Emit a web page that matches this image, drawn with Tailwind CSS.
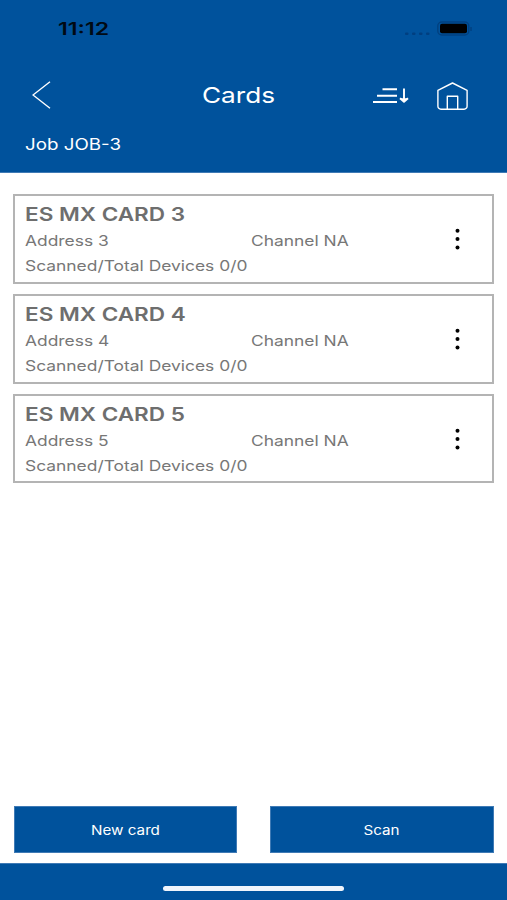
<!DOCTYPE html>
<html lang="en">
<head>
    <meta charset="UTF-8">
    <meta name="viewport" content="width=device-width, initial-scale=1.0">
    <title>Cards</title>
    <script src="https://cdn.jsdelivr.net/npm/@tailwindcss/browser@4"></script>
</head>
<body class="bg-white font-['Inter','Liberation_Sans',sans-serif]">
    <div class="flex h-[900px] w-[507px] flex-col overflow-hidden">
        <header class="h-[173px] shrink-0 border-b border-[#3f7ab5] bg-[#00529c] text-white">
            <!-- Status bar -->
            <div class="flex h-[57px] items-center justify-between pr-[35px] pl-[58px]">
                <span class="origin-left scale-x-[1.36] text-[17px] leading-6 font-semibold text-[#000a14]">11:12</span>
                <svg class="h-[16px] w-[70px]" viewBox="0 0 70 16" fill="none">
                    <g fill="#003f80">
                        <rect x="3" y="11.500" width="3.500" height="2.500" rx="1" />
                        <rect x="10" y="11.500" width="3.500" height="2.500" rx="1" />
                        <rect x="17" y="11.500" width="3.500" height="2.500" rx="1" />
                        <rect x="24" y="11.500" width="3.500" height="2.500" rx="1" />
                    </g>
                    <rect x="35.800" y="1" width="31" height="13" rx="4" stroke="#00407f" stroke-width="1.4" />
                    <rect x="38" y="2.800" width="27" height="9.500" rx="2" fill="#000" />
                    <path d="M69 6v4" stroke="#00407f" stroke-width="1.4" />
                </svg>
            </div>

            <!-- Title bar -->
            <div class="grid h-[76px] grid-cols-[170px_auto_1fr] items-center pr-[39px] pl-[32px]">
                <svg class="h-[28px] w-[19px]" viewBox="0 0 19 28" fill="none" stroke="#fff" stroke-width="1.4">
                    <path d="M18 .8L1 14l17 13.2" />
                </svg>
                <h1 class="origin-left scale-x-[1.19] text-[22px] leading-7">Cards</h1>
                <div class="flex items-center justify-end gap-[28px]">
                    <svg class="h-[28px] w-[38px]" viewBox="0 0 38 28" fill="none" stroke="#fff" stroke-width="1.9">
                        <path d="M11.500 8.200H26M6 14.700h20M2 21h24M33 7.500V18" />
                        <path d="M29 17.300l4 3.500 4-3.500" fill="#fff" stroke-linejoin="round" />
                    </svg>
                    <svg class="mt-[2px] h-[28px] w-[31px]" viewBox="0 0 31 28" fill="none" stroke="#fff" stroke-width="1.4" stroke-linejoin="round">
                        <path d="M.9 8.300L15.500 1l14.600 7.300v15.900a3 3 0 0 1-3 3H3.900a3 3 0 0 1-3-3z" />
                        <path d="M10.300 27V14.200h10.400V27" />
                    </svg>
                </div>
            </div>
            <div class="pt-[1px] pl-[24.500px]">
                <p class="w-fit origin-left scale-x-[1.21] text-[15.500px] leading-[22px]">Job JOB-3</p>
            </div>
        </header>

        <main class="flex grow flex-col gap-[10px] px-[13px] pt-[21.300px] text-[#777]">
            <section class="flex h-[89.700px] items-center border-2 border-[#b4b4b4] pr-[29px] pl-[9.500px]">
                <div class="grow pt-[1px]">
                    <h2 class="w-fit origin-left scale-x-[1.2] text-[18.800px] leading-[27px] font-semibold text-[#6e6e6e]">ES MX CARD 3</h2>
                    <div class="grid grid-cols-[226.500px_1fr] text-[14.500px] leading-[25px]">
                        <span class="w-fit origin-left scale-x-[1.2]">Address 3</span>
                        <span class="w-fit origin-left scale-x-[1.2]">Channel NA</span>
                        <span class="w-fit origin-left scale-x-[1.2] whitespace-nowrap">Scanned/Total Devices 0/0</span>
                    </div>
                </div>
                <svg class="h-[22px] w-[10px]" viewBox="0 0 10 22" fill="#000">
                    <circle cx="4.500" cy="2.800" r="2" />
                    <circle cx="4.500" cy="11" r="2" />
                    <circle cx="4.500" cy="19.500" r="2" />
                </svg>
            </section>
            <section class="flex h-[89.700px] items-center border-2 border-[#b4b4b4] pr-[29px] pl-[9.500px]">
                <div class="grow pt-[1px]">
                    <h2 class="w-fit origin-left scale-x-[1.2] text-[18.800px] leading-[27px] font-semibold text-[#6e6e6e]">ES MX CARD 4</h2>
                    <div class="grid grid-cols-[226.500px_1fr] text-[14.500px] leading-[25px]">
                        <span class="w-fit origin-left scale-x-[1.2]">Address 4</span>
                        <span class="w-fit origin-left scale-x-[1.2]">Channel NA</span>
                        <span class="w-fit origin-left scale-x-[1.2] whitespace-nowrap">Scanned/Total Devices 0/0</span>
                    </div>
                </div>
                <svg class="h-[22px] w-[10px]" viewBox="0 0 10 22" fill="#000">
                    <circle cx="4.500" cy="2.800" r="2" />
                    <circle cx="4.500" cy="11" r="2" />
                    <circle cx="4.500" cy="19.500" r="2" />
                </svg>
            </section>
            <section class="flex h-[89.700px] items-center border-2 border-[#b4b4b4] pr-[29px] pl-[9.500px]">
                <div class="grow pt-[1px]">
                    <h2 class="w-fit origin-left scale-x-[1.2] text-[18.800px] leading-[27px] font-semibold text-[#6e6e6e]">ES MX CARD 5</h2>
                    <div class="grid grid-cols-[226.500px_1fr] text-[14.500px] leading-[25px]">
                        <span class="w-fit origin-left scale-x-[1.2]">Address 5</span>
                        <span class="w-fit origin-left scale-x-[1.2]">Channel NA</span>
                        <span class="w-fit origin-left scale-x-[1.2] whitespace-nowrap">Scanned/Total Devices 0/0</span>
                    </div>
                </div>
                <svg class="h-[22px] w-[10px]" viewBox="0 0 10 22" fill="#000">
                    <circle cx="4.500" cy="2.800" r="2" />
                    <circle cx="4.500" cy="11" r="2" />
                    <circle cx="4.500" cy="19.500" r="2" />
                </svg>
            </section>
        </main>

        <div class="grid shrink-0 grid-cols-2 gap-[33px] px-[13.500px] pb-[10px] text-[13px] text-white">
            <button class="h-[47px] border border-[#3f7ab5] bg-[#00529c] pt-[2px]"><span class="inline-block scale-x-[1.17]">New card</span></button>
            <button class="h-[47px] border border-[#3f7ab5] bg-[#00529c] pt-[2px]"><span class="inline-block scale-x-[1.17]">Scan</span></button>
        </div>

        <!-- Home indicator -->
        <footer class="flex h-[37px] shrink-0 justify-center border-t border-[#3f7ab5] bg-[#00529c] pt-[22px]">
            <div class="h-[5px] w-[181px] rounded-full bg-[#f0f5fc]"></div>
        </footer>
    </div>
</body>
</html>
